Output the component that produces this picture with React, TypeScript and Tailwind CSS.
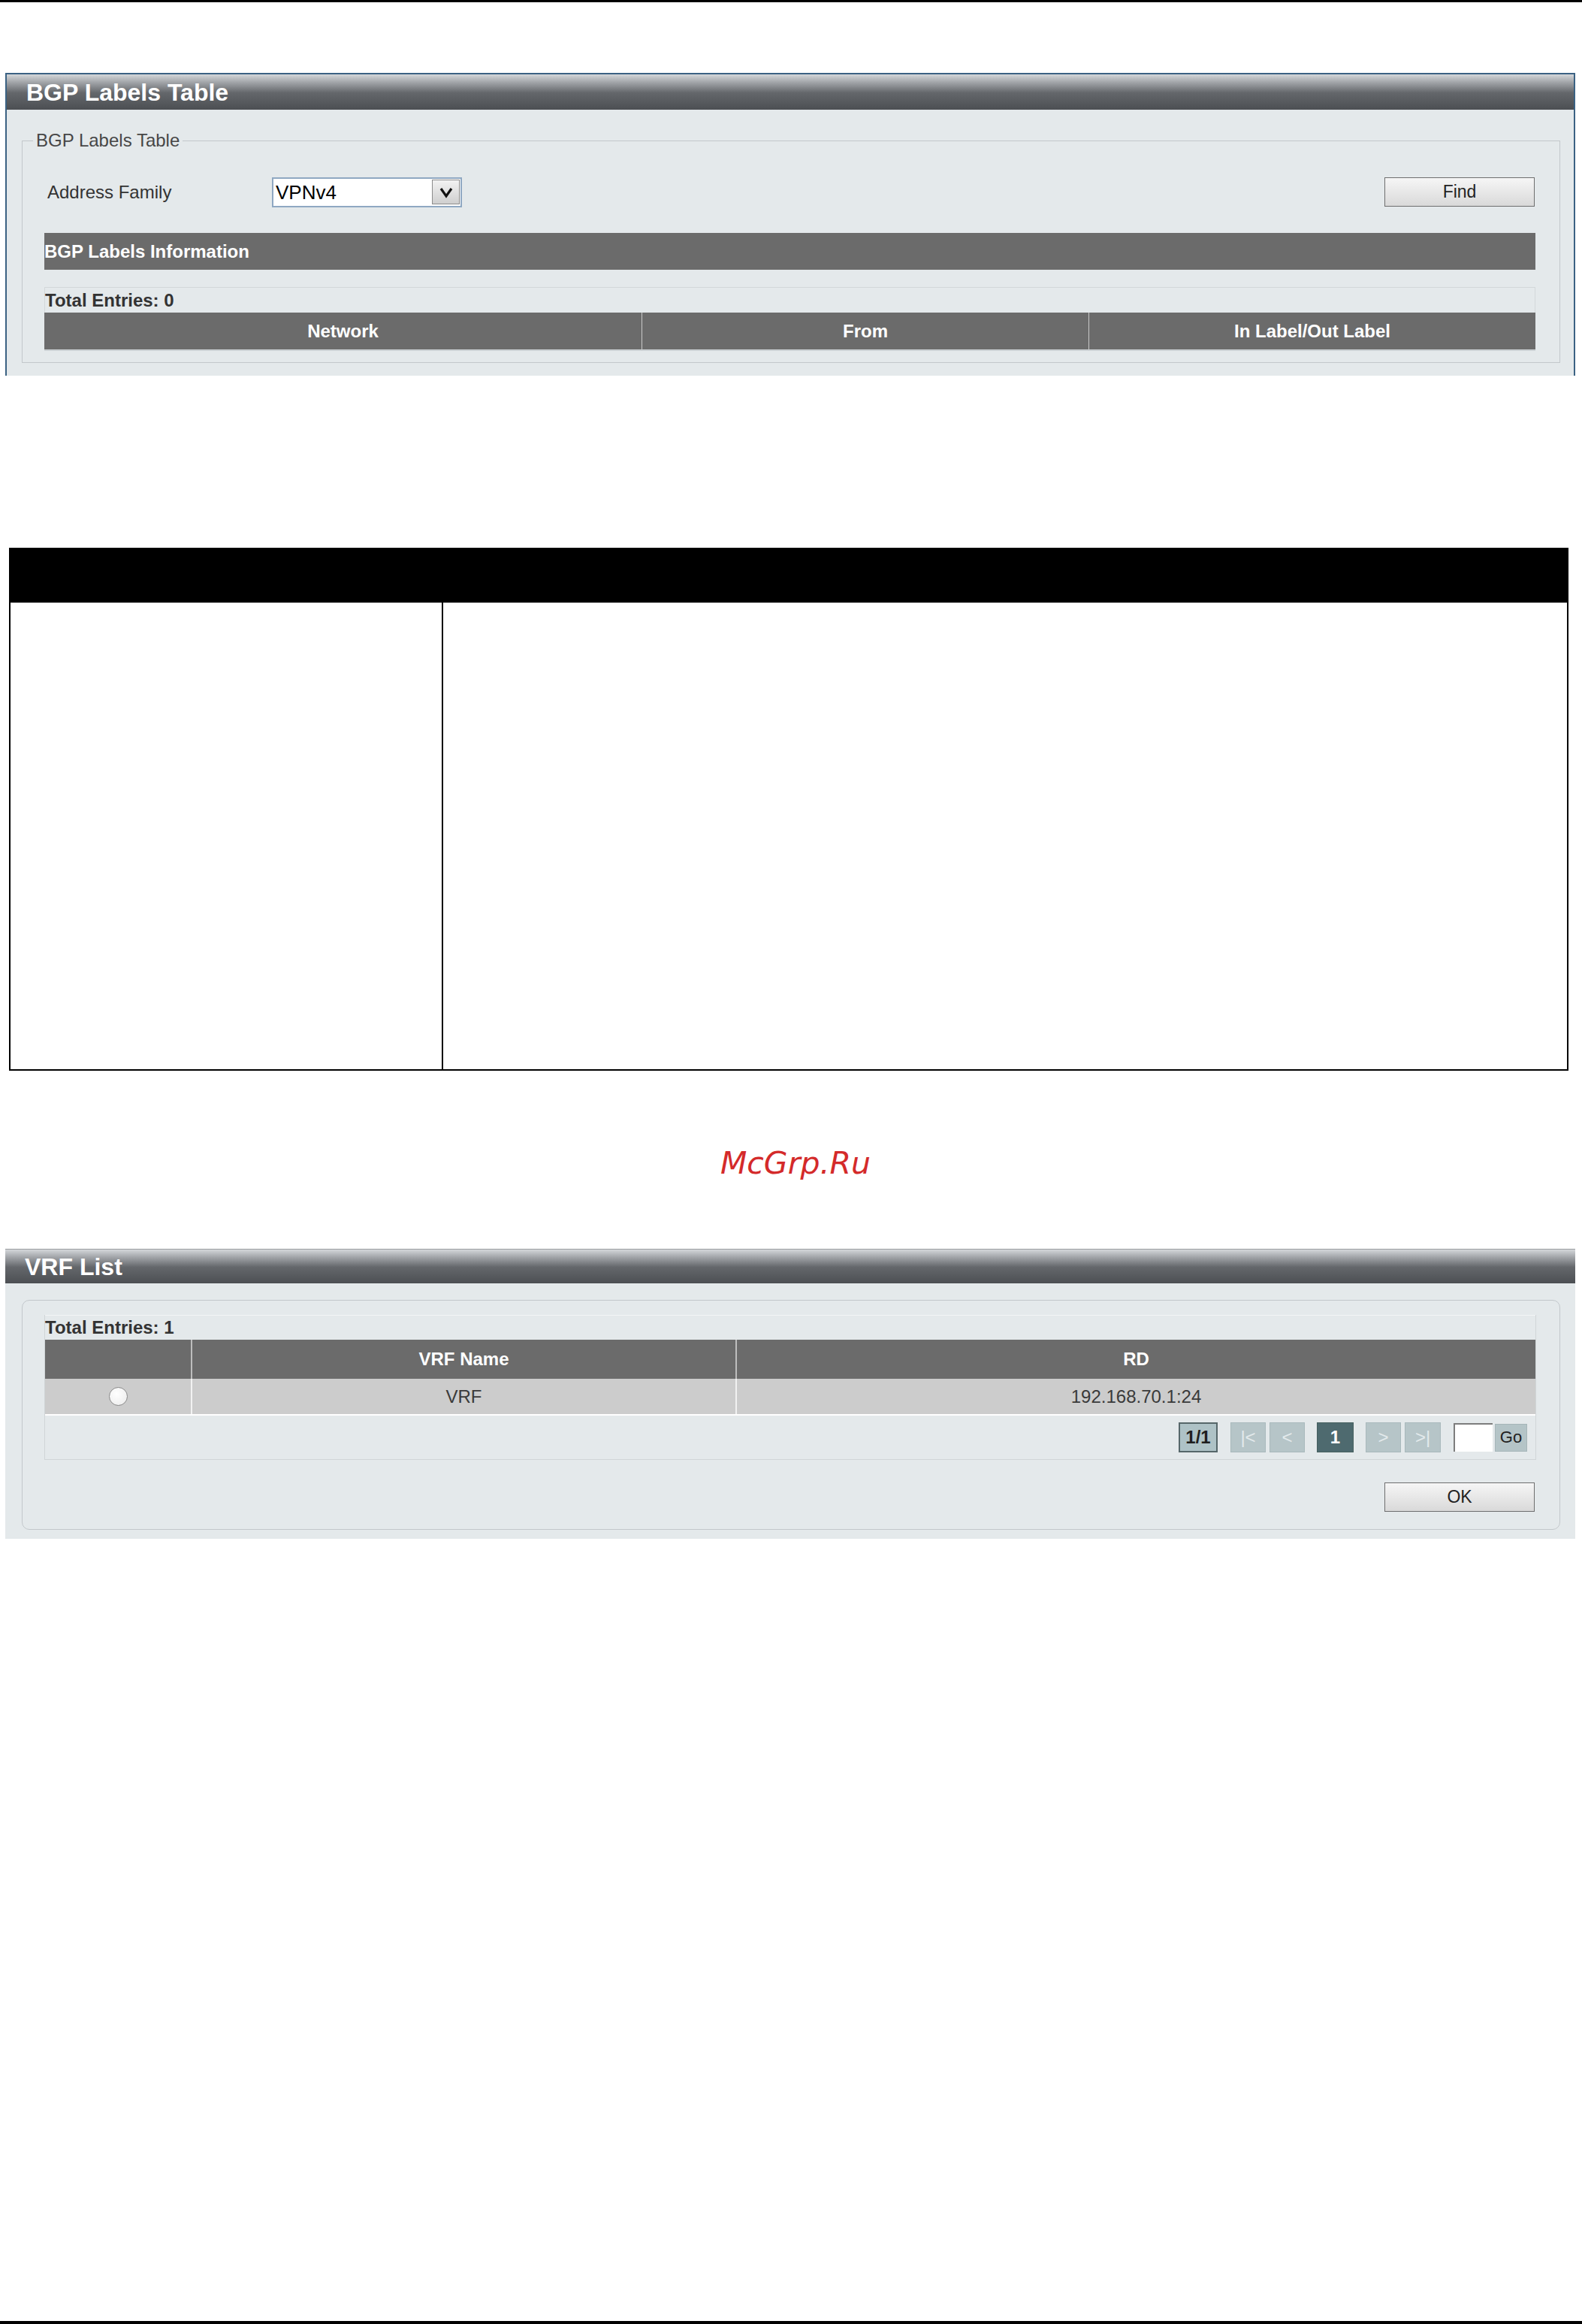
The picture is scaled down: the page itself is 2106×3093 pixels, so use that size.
const font = "font-['Liberation_Sans',Arial,sans-serif]";

function PanelHeader({ title, className }: { title: string; className?: string }) {
  return (
    <div
      className={`flex items-center pl-[26px] bg-[linear-gradient(to_bottom,#d4d7da_0%,#a3a6aa_22%,#64676b_52%,#4c4f53_100%)] ${className ?? ""}`}
    >
      <span className="text-[32px] leading-[32px] font-bold text-white">{title}</span>
    </div>
  );
}

function GrayButton({ label }: { label: string }) {
  return (
    <button
      type="button"
      className="w-[200px] h-[39px] border border-[#6e6e6e] bg-[linear-gradient(to_bottom,#f6f6f6,#d9d9d9)] text-[23px] leading-none text-[#222]"
    >
      {label}
    </button>
  );
}

function BgpLabelsPanel() {
  return (
    <section className="ml-[7px] w-[2090px] mt-[94px] border-x-2 border-t-2 border-[#3b6283] bg-[#e4e9eb]">
      <PanelHeader title="BGP Labels Table" className="h-[47px]" />
      <div className="pb-[17px]">
        <fieldset className="ml-[20px] w-[2048px] mt-[27px] border border-[#c3c8cb] pb-[15px]">
          <legend className="ml-[14px] px-[4px] text-[24px] leading-[28px] text-[#474747]">BGP Labels Table</legend>

          <div className="mt-[34px] h-[41px] flex items-center pl-[33px] pr-[33px]">
            <span className="w-[299px] text-[24px] text-[#333]">Address Family</span>
            <div className="w-[253px] h-[40px] border-2 border-[#8fa8c2] bg-white flex items-center justify-between pl-[3px] pr-[1px]">
              <span className="text-[26px] leading-none text-black">VPNv4</span>
              <div className="w-[37px] h-[33px] border border-[#8c8c8c] bg-[linear-gradient(to_bottom,#f2f2f2,#cfcfcf)] flex items-center justify-center">
                <svg width="20" height="16" viewBox="0 0 20 16">
                  <path d="M3 3 L10 13 L17 3" fill="none" stroke="#111" strokeWidth="3.2" />
                </svg>
              </div>
            </div>
            <div className="ml-auto">
              <GrayButton label="Find" />
            </div>
          </div>

          <div className="ml-[29px] w-[1985px] mt-[34px] h-[49px] bg-[#6b6b6b] flex items-center">
            <span className="text-[24px] font-bold text-white">BGP Labels Information</span>
          </div>

          <div className="ml-[29px] w-[1985px] mt-[23px]">
            <div className="h-[34px] border-t border-x border-[#d3d8da] flex items-center">
              <span className="text-[24px] font-bold text-[#333]">Total Entries: 0</span>
            </div>
            <div className="h-[49px] bg-[#6b6b6b] flex text-[24px] font-bold text-white">
              <div className="w-[795px] flex items-center justify-center">Network</div>
              <div className="w-[595px] flex items-center justify-center border-l border-[#c9c9c9]">From</div>
              <div className="flex-1 flex items-center justify-center border-l border-[#c9c9c9]">In Label/Out Label</div>
            </div>
            <div className="h-[2px] bg-[#cbd0d3]" />
          </div>
        </fieldset>
      </div>
    </section>
  );
}

function BlackTable() {
  return (
    <div className="ml-[12px] w-[2076px] mt-[229px]">
      <div className="h-[73px] bg-black" />
      <div className="h-[623px] flex border-x-2 border-b-2 border-black">
        <div className="w-[576px] border-r-2 border-black" />
        <div className="flex-1" />
      </div>
    </div>
  );
}

function NavBox({ label, width, variant }: { label: string; width: string; variant: "dim" | "count" | "active" }) {
  const styles = {
    dim: "bg-[#b6c5c8] border border-[#a9b9bc] text-[#e3eaec] font-normal",
    count: "bg-[#aec2c6] border-2 border-[#56676a] text-[#1f1f1f] font-bold",
    active: "bg-[#4e6a6f] border border-[#46605f] text-white font-bold",
  }[variant];
  return (
    <div className={`${width} h-[40px] flex items-center justify-center text-[24px] leading-none ${styles}`}>
      {label}
    </div>
  );
}

function VrfListPanel() {
  return (
    <section className="ml-[7px] w-[2090px] mt-[90px] bg-[#e4e9eb]">
      <PanelHeader title="VRF List" className="h-[46px] border-t border-[#9a9da0]" />
      <div className="pb-[12px]">
        <div className="ml-[22px] w-[2048px] mt-[22px] border border-[#c3c8cb] rounded-[10px] pb-[23px]">
          <div className="ml-[29px] w-[1986px] mt-[19px] border-x border-b border-[#d0d5d7]">
            <div className="h-[33px] border-t border-[#f3f5f6] flex items-center">
              <span className="text-[24px] font-bold text-[#333]">Total Entries: 1</span>
            </div>
            <div className="h-[52px] bg-[#6b6b6b] flex text-[24px] font-bold text-white">
              <div className="w-[194px]" />
              <div className="w-[725px] flex items-center justify-center border-l-2 border-[#bdbdbd]">VRF Name</div>
              <div className="flex-1 flex items-center justify-center border-l-2 border-[#bdbdbd]">RD</div>
            </div>
            <div className="h-[49px] bg-[#cccccc] border-b-2 border-white flex text-[24px] text-[#3a3a3a]">
              <div className="w-[194px] flex items-center justify-center">
                <div className="w-[25px] h-[25px] rounded-full border border-[#8a8a8a] bg-[radial-gradient(circle_at_40%_35%,#ffffff,#eaeaea)]" />
              </div>
              <div className="w-[725px] flex items-center justify-center border-l-2 border-[#f2f2f2]">VRF</div>
              <div className="flex-1 flex items-center justify-center border-l-2 border-[#f2f2f2]">192.168.70.1:24</div>
            </div>
            <div className="h-[58px] flex items-center justify-end pr-[11px]">
              <NavBox label="1/1" width="w-[52px]" variant="count" />
              <div className="ml-[17px] flex gap-[5px]">
                <NavBox label="|<" width="w-[47px]" variant="dim" />
                <NavBox label="<" width="w-[47px]" variant="dim" />
              </div>
              <div className="ml-[16px]">
                <NavBox label="1" width="w-[49px]" variant="active" />
              </div>
              <div className="ml-[16px] flex gap-[5px]">
                <NavBox label=">" width="w-[47px]" variant="dim" />
                <NavBox label=">|" width="w-[48px]" variant="dim" />
              </div>
              <div className="ml-[17px] w-[52px] h-[38px] bg-white border-t-2 border-l-2 border-[#7d7d7d]" />
              <div className="ml-[3px] w-[43px] h-[37px] bg-[#b4c4c7] border border-[#a6b6b9] flex items-center justify-center text-[22px] leading-none text-[#222]">
                Go
              </div>
            </div>
          </div>
          <div className="mt-[30px] flex justify-end pr-[33px]">
            <GrayButton label="OK" />
          </div>
        </div>
      </div>
    </section>
  );
}

export default function App() {
  return (
    <div className={`w-[2106px] h-[3093px] bg-white flex flex-col ${font}`}>
      <div className="h-[3px] bg-black shrink-0" />
      <BgpLabelsPanel />
      <BlackTable />
      <div className="mt-[99px] h-[48px] pl-[12px] text-center text-[41px] leading-[48px] italic text-[#d42a2a] font-['DejaVu_Sans',sans-serif]">
        McGrp.Ru
      </div>
      <VrfListPanel />
      <div className="mt-auto h-[4px] bg-black shrink-0" />
    </div>
  );
}
